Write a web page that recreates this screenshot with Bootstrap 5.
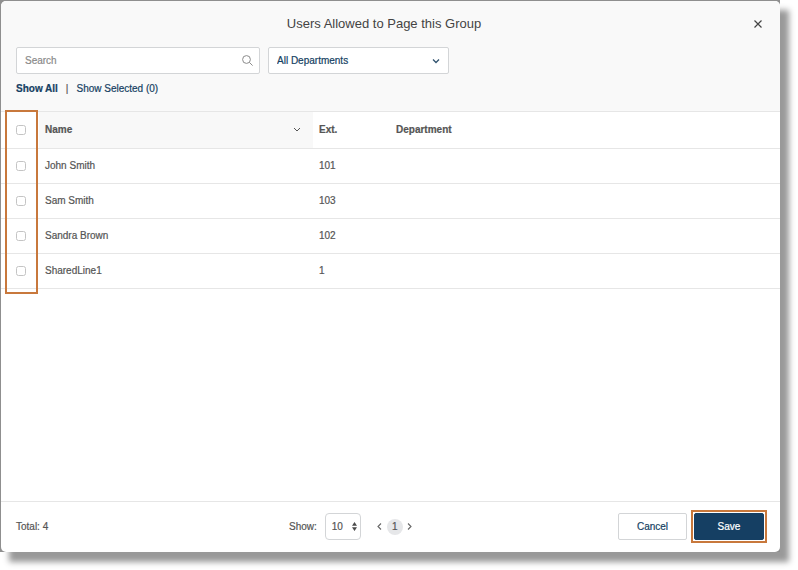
<!DOCTYPE html>
<html lang="en">
<head>
<meta charset="utf-8">
<meta name="viewport" content="width=device-width, initial-scale=1">
<title>Users Allowed to Page this Group</title>
<link href="https://cdn.jsdelivr.net/npm/bootstrap@5.3.0/dist/css/bootstrap.min.css" rel="stylesheet">
<style>
  :root { --navy: #153f63; --orange: #c8783c; --edge: #d3d5d7; --rule: #e6e6e6; --ink: #555; }
  body { font-family: "Liberation Sans", Arial, sans-serif; font-size: 10px; line-height: 14px; color: var(--ink); background: #fff; padding: 0 18px 18px 0; -webkit-text-stroke: 0.2px; }
  .backdrop-frame { background: #8f8f8f; padding: 1px 0 0 1px; box-shadow: 9px 10px 6px #999; }
  .dialog { border-radius: 5px; overflow: hidden; }
  .dialog-head { background: #f9f9f9; padding: 14px 16px 15px 15px; }
  .dialog-title { font-size: 13px; line-height: 18px; font-weight: 400; -webkit-text-stroke: 0; color: #444; }
  .close-btn { width: 12px; height: 18px; color: #444; }
  .search-wrap { width: 244px; }
  .dept-wrap { width: 181px; }
  .form-control, .form-select, .btn { font-size: 10px; line-height: 14px; border-color: var(--edge); border-radius: 2px; height: 27px; padding: 5px 8px; -webkit-text-stroke: inherit; }
  .form-select { background-image: none; color: var(--navy); }
  .form-control::placeholder { color: #8a8a8a; }
  .field-icon { right: 7px; top: 0; height: 27px; pointer-events: none; }
  .filters { margin-top: 14px; }
  .views { margin-top: 8px; }
  .views a { color: var(--navy); text-decoration: none; }
  .table { --bs-table-bg: transparent; color: var(--ink); table-layout: fixed; border-color: var(--rule); border-top: 1px solid var(--rule); }
  .table > :not(caption) > * > * { height: 35px; padding: 0 6px; vertical-align: middle; border-bottom: 1px solid var(--rule); color: var(--ink); }
  .table > thead > tr > th { height: 37px; }
  .table th.sorted { background: #f8f8f8; }
  .col-pick { width: 38px; }
  .col-name { width: 274px; }
  .col-ext { width: 77px; }
  .form-check-input { width: 10px; height: 10px; margin: 0 0 0 9px; border-color: #c4c4c4; border-radius: 3px; float: none; display: block; }
  .sort-btn { width: 20px; height: 20px; color: #555; }
  .pick-outline { left: 4px; top: -1px; bottom: -5px; width: 33px; border: 2px solid var(--orange); pointer-events: none; }
  .dialog-foot { border-top: 1px solid var(--rule); padding: 8px 13px 9px 15px; }
  .foot-total { width: 273px; }
  .size-wrap { width: 36px; }
  .size-wrap .form-select { border-radius: 4px; padding: 5px 6px; color: var(--ink); }
  .size-wrap .field-icon { right: 4px; }
  .pager .btn { width: 14px; height: 16px; padding: 0; color: #666; }
  .page-now { width: 16px; height: 16px; line-height: 16px; background: #e6e7e9; border-radius: 50%; }
  .btn-cancel { width: 69px; background: #fff; color: var(--navy); }
  .btn-save, .btn-save:hover { width: 70px; background: var(--navy); border-color: var(--navy); color: #fff; }
  .save-outline { border: 2px solid var(--orange); padding: 1px; }
</style>
<script src="https://cdn.jsdelivr.net/npm/bootstrap@5.3.0/dist/js/bootstrap.bundle.min.js"></script>
</head>
<body class="d-flex flex-column min-vh-100">
<div class="backdrop-frame flex-grow-1 d-flex">
  <main class="dialog bg-white flex-grow-1 d-flex flex-column">
    <header class="dialog-head">
      <div class="d-flex align-items-center">
        <h1 class="dialog-title text-center flex-grow-1 m-0">Users Allowed to Page this Group</h1>
        <button type="button" class="close-btn border-0 bg-transparent p-0 d-flex align-items-center justify-content-center" aria-label="Close">
          <svg width="8" height="8" viewBox="0 0 8 8" stroke="currentColor" stroke-width="1.2" fill="none"><path d="M.5.5l7 7M7.500.5l-7 7"/></svg>
        </button>
      </div>
      <div class="filters d-flex gap-2">
        <div class="search-wrap position-relative">
          <input type="text" class="form-control" placeholder="Search" aria-label="Search">
          <span class="field-icon position-absolute d-flex align-items-center"><svg width="11" height="11" viewBox="0 0 11 11" fill="none" stroke="#8b8b8b"><circle cx="4.500" cy="4.500" r="3.900"/><path d="M7.400 7.400l3.200 3.200"/></svg></span>
        </div>
        <div class="dept-wrap position-relative">
          <select class="form-select" aria-label="Department filter"><option>All Departments</option></select>
          <span class="field-icon position-absolute d-flex align-items-center"><svg width="12" height="8" viewBox="0 0 12 8" fill="none" stroke="#31536f" stroke-width="1.300"><path d="M3 2.500l3 3 3-3"/></svg></span>
        </div>
      </div>
      <nav class="views d-flex gap-2" aria-label="View">
        <a href="#" class="fw-bold">Show All</a><span>|</span><a href="#">Show Selected (0)</a>
      </nav>
    </header>
    <div class="flex-grow-1">
      <div class="position-relative">
        <table class="table mb-0">
          <thead>
            <tr>
              <th class="col-pick"><input type="checkbox" class="form-check-input" aria-label="Select all"></th>
              <th class="col-name sorted"><div class="d-flex align-items-center justify-content-between">Name
                <button type="button" class="sort-btn border-0 bg-transparent p-0 d-flex align-items-center justify-content-center" aria-label="Sort by name"><svg width="8" height="6" viewBox="0 0 8 6" fill="none" stroke="currentColor"><path d="M1 1l3 3 3-3"/></svg></button></div></th>
              <th class="col-ext">Ext.</th>
              <th>Department</th>
            </tr>
          </thead>
          <tbody>
            <tr><td><input type="checkbox" class="form-check-input" id="u1"></td><td><label for="u1">John Smith</label></td><td>101</td><td></td></tr>
            <tr><td><input type="checkbox" class="form-check-input" id="u2"></td><td><label for="u2">Sam Smith</label></td><td>103</td><td></td></tr>
            <tr><td><input type="checkbox" class="form-check-input" id="u3"></td><td><label for="u3">Sandra Brown</label></td><td>102</td><td></td></tr>
            <tr><td><input type="checkbox" class="form-check-input" id="u4"></td><td><label for="u4">SharedLine1</label></td><td>1</td><td></td></tr>
          </tbody>
        </table>
        <div class="pick-outline position-absolute"></div>
      </div>
    </div>
    <footer class="dialog-foot d-flex align-items-center">
      <div class="foot-total">Total: 4</div>
      <div class="d-flex align-items-center gap-2">
        <label for="size">Show:</label>
        <div class="size-wrap position-relative">
          <select class="form-select" id="size"><option>10</option></select>
          <span class="field-icon position-absolute d-flex align-items-center"><svg width="5" height="9" viewBox="0 0 5 9" fill="#4b4b4b"><path d="M0 3.800L2.500 0 5 3.800zM0 5.200L2.500 9 5 5.200z"/></svg></span>
        </div>
        <div class="pager d-flex align-items-center ms-1">
          <button type="button" class="btn border-0 d-flex align-items-center justify-content-center" aria-label="Previous page"><svg width="5" height="7" viewBox="0 0 5 7" fill="none" stroke="currentColor" stroke-width="1.100"><path d="M4 .5l-3 3 3 3"/></svg></button>
          <span class="page-now text-center">1</span>
          <button type="button" class="btn border-0 d-flex align-items-center justify-content-center" aria-label="Next page"><svg width="5" height="7" viewBox="0 0 5 7" fill="none" stroke="currentColor" stroke-width="1.100"><path d="M1 .5l3 3-3 3"/></svg></button>
        </div>
      </div>
      <div class="ms-auto d-flex align-items-center gap-1">
        <button type="button" class="btn btn-cancel">Cancel</button>
        <div class="save-outline"><button type="button" class="btn btn-save d-block">Save</button></div>
      </div>
    </footer>
  </main>
</div>
</body>
</html>
